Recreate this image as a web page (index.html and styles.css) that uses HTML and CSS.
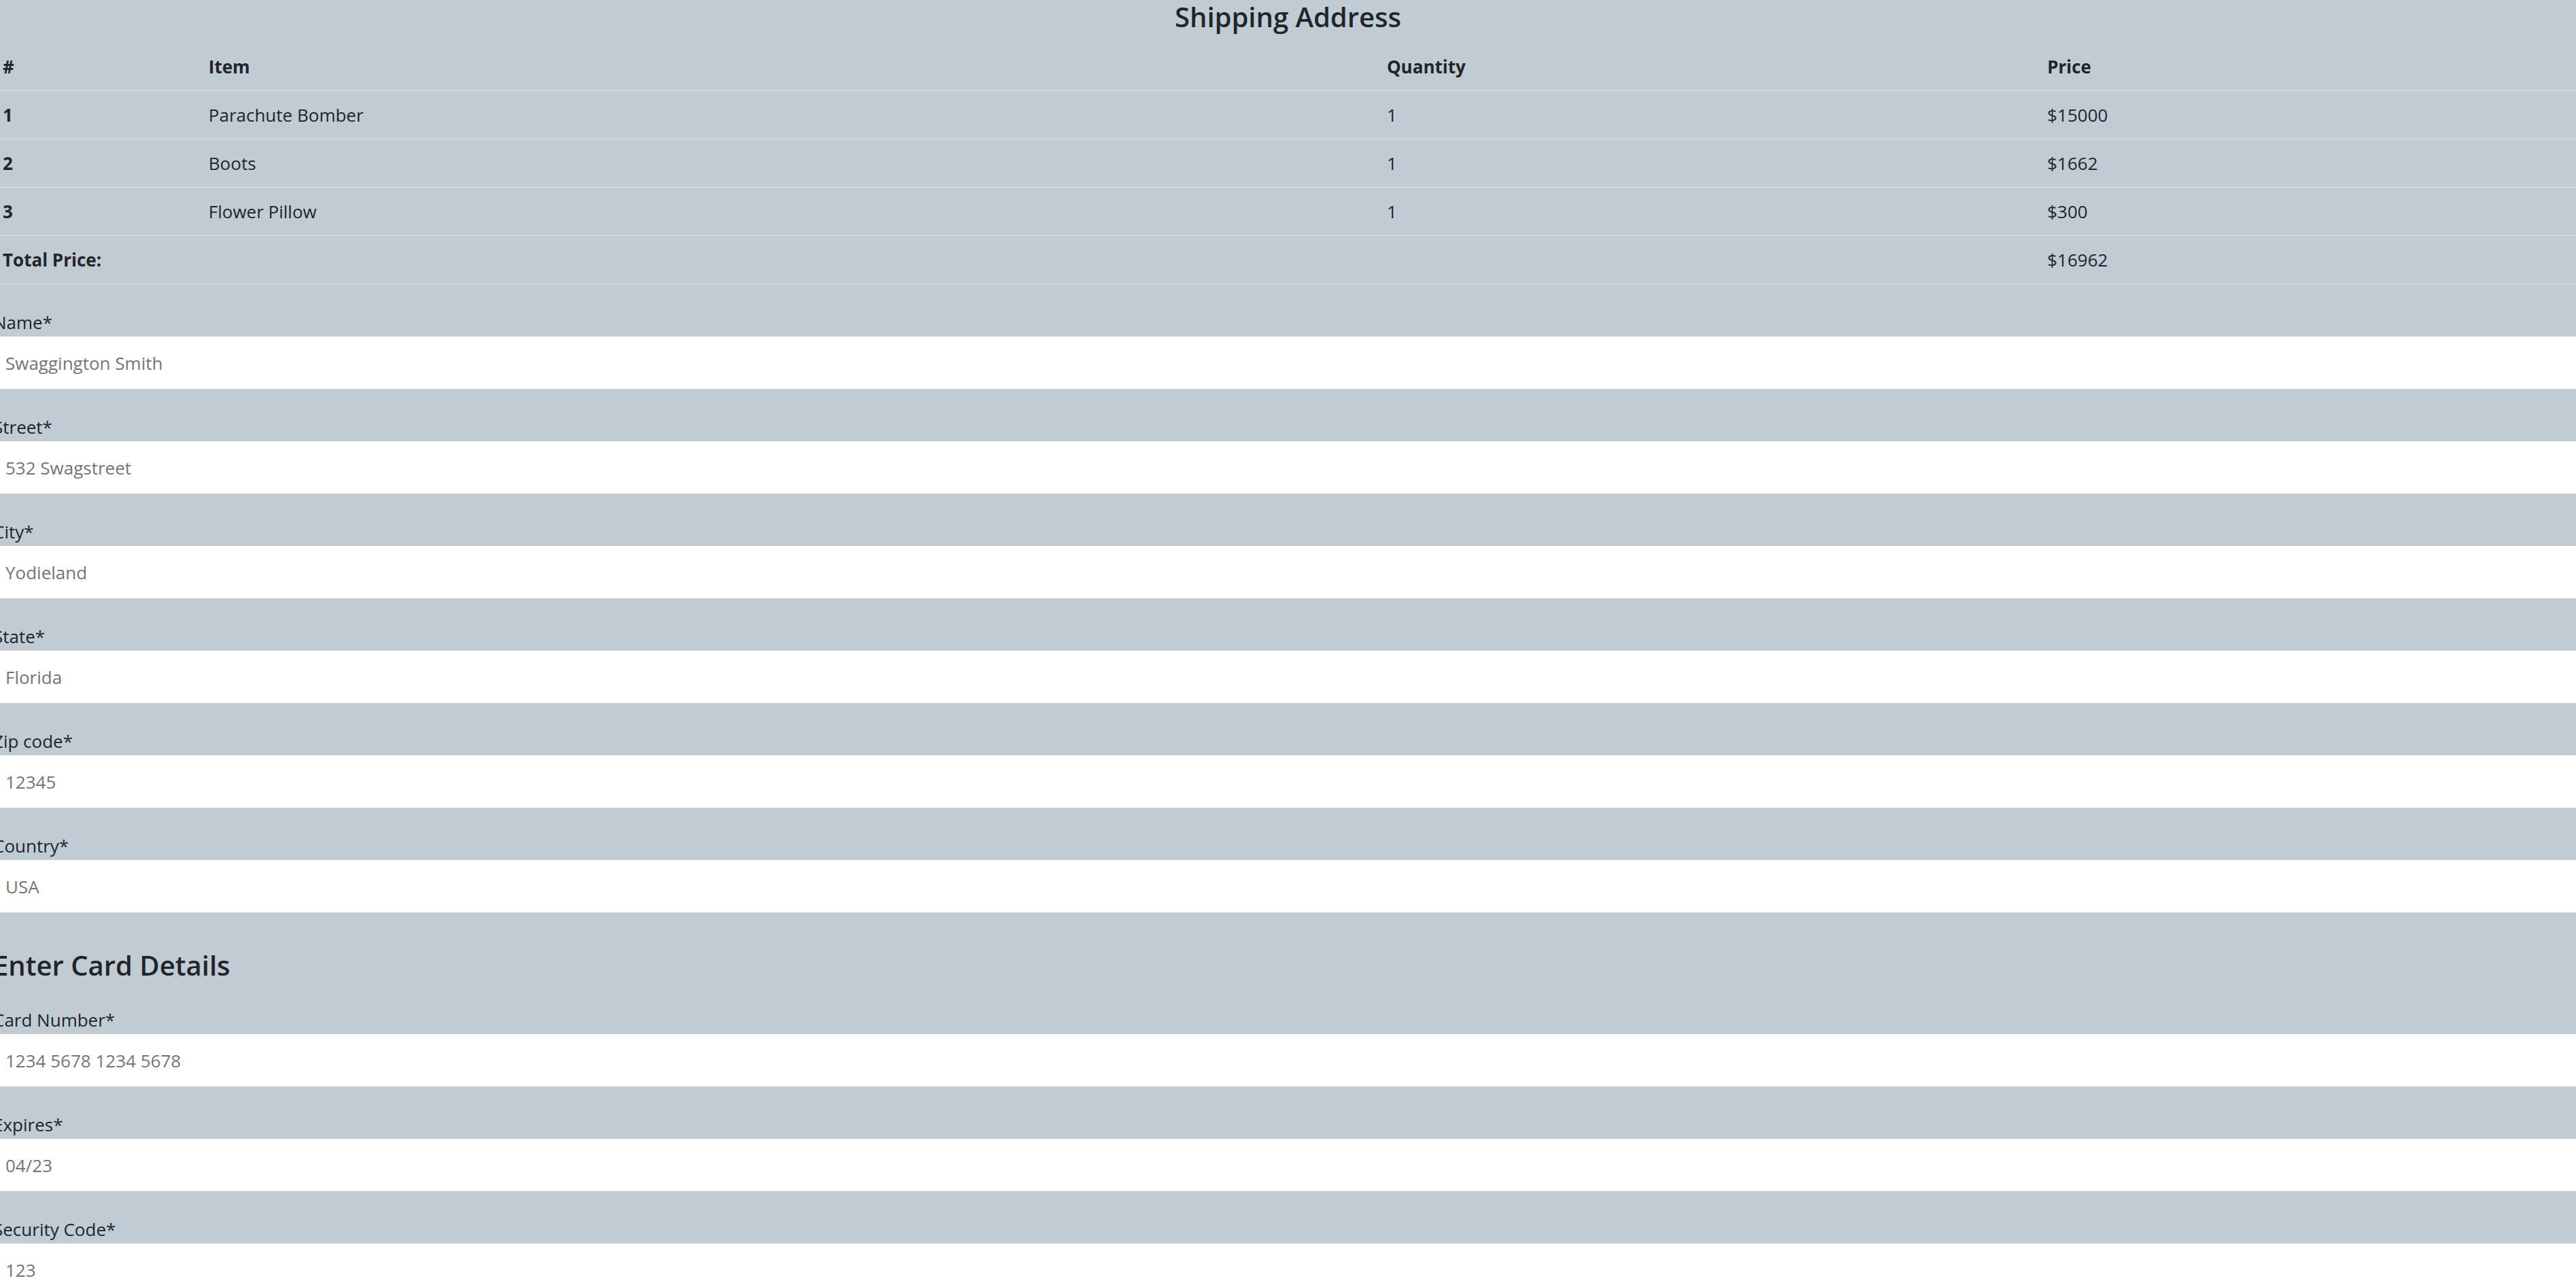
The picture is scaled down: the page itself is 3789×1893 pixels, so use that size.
FILE: index.html
```html
<!DOCTYPE html>
<html lang="en">
<head>
<meta charset="utf-8">
<meta name="viewport" content="width=device-width, initial-scale=1">
<title>Checkout</title>
<link rel="stylesheet" href="styles.css">
</head>
<body>
<main class="checkout">
  <h1 class="title title-center">Shipping Address</h1>
  <table class="cart">
    <colgroup>
      <col class="col-index">
      <col class="col-item">
      <col class="col-quantity">
      <col class="col-price">
    </colgroup>
    <thead>
      <tr><th scope="col">#</th><th scope="col">Item</th><th scope="col">Quantity</th><th scope="col">Price</th></tr>
    </thead>
    <tbody>
      <tr><th scope="row">1</th><td>Parachute Bomber</td><td>1</td><td>$15000</td></tr>
      <tr><th scope="row">2</th><td>Boots</td><td>1</td><td>$1662</td></tr>
      <tr><th scope="row">3</th><td>Flower Pillow</td><td>1</td><td>$300</td></tr>
      <tr><th scope="row" colspan="3">Total Price:</th><td>$16962</td></tr>
    </tbody>
  </table>
  <form class="details">
    <section class="fields">
      <div class="field"><label for="name">Name*</label><input id="name" type="text" placeholder="Swaggington Smith"></div>
      <div class="field"><label for="street">Street*</label><input id="street" type="text" placeholder="532 Swagstreet"></div>
      <div class="field"><label for="city">City*</label><input id="city" type="text" placeholder="Yodieland"></div>
      <div class="field"><label for="state">State*</label><input id="state" type="text" placeholder="Florida"></div>
      <div class="field"><label for="zip">Zip code*</label><input id="zip" type="text" placeholder="12345"></div>
      <div class="field"><label for="country">Country*</label><input id="country" type="text" placeholder="USA"></div>
    </section>
    <h2 class="title title-card">Enter Card Details</h2>
    <section class="fields">
      <div class="field"><label for="card">Card Number*</label><input id="card" type="text" placeholder="1234 5678 1234 5678"></div>
      <div class="field"><label for="expires">Expires*</label><input id="expires" type="text" placeholder="04/23"></div>
      <div class="field"><label for="code">Security Code*</label><input id="code" type="text" placeholder="123"></div>
    </section>
  </form>
</main>
</body>
</html>
```
FILE: styles.css
```css
*,
*::before,
*::after {
  box-sizing: border-box;
}

body {
  margin: 0;
  overflow-x: hidden;
  background: #c1cbd3;
  color: #212529;
  font: 400 26px/42px "Segoe UI", "Open Sans", "Noto Sans", sans-serif;
}

/* Full-bleed gutter: the content runs past both window edges */
.checkout {
  margin: 0 -10px;
}

.title {
  margin: 0;
  font-size: 40px;
  font-weight: 600;
  line-height: 50px;
}

.title-center {
  margin-bottom: 13px;
  text-align: center;
}

.title-card {
  margin: 53px 0 34px;
}

.cart {
  width: 100%;
  border-collapse: collapse;
  table-layout: fixed;
}

.col-index {
  width: 7.95%;
}

.col-item {
  width: 45.5%;
}

.col-quantity {
  width: 25.5%;
}

.cart th,
.cart td {
  padding: 14px;
  border-bottom: 1px solid #dee2e6;
  text-align: left;
}

.cart th {
  font-weight: 700;
}

.details {
  padding-top: 35px;
}

.fields {
  display: grid;
  gap: 35px;
}

.field {
  display: flex;
  flex-direction: column;
}

.field input {
  width: 100%;
  height: 77px;
  padding: 0 18px;
  border: 0;
  border-radius: 0;
  background: #fff;
  color: #212529;
  font: inherit;
}

.field input::placeholder {
  color: #757575;
  opacity: 1;
}
```
